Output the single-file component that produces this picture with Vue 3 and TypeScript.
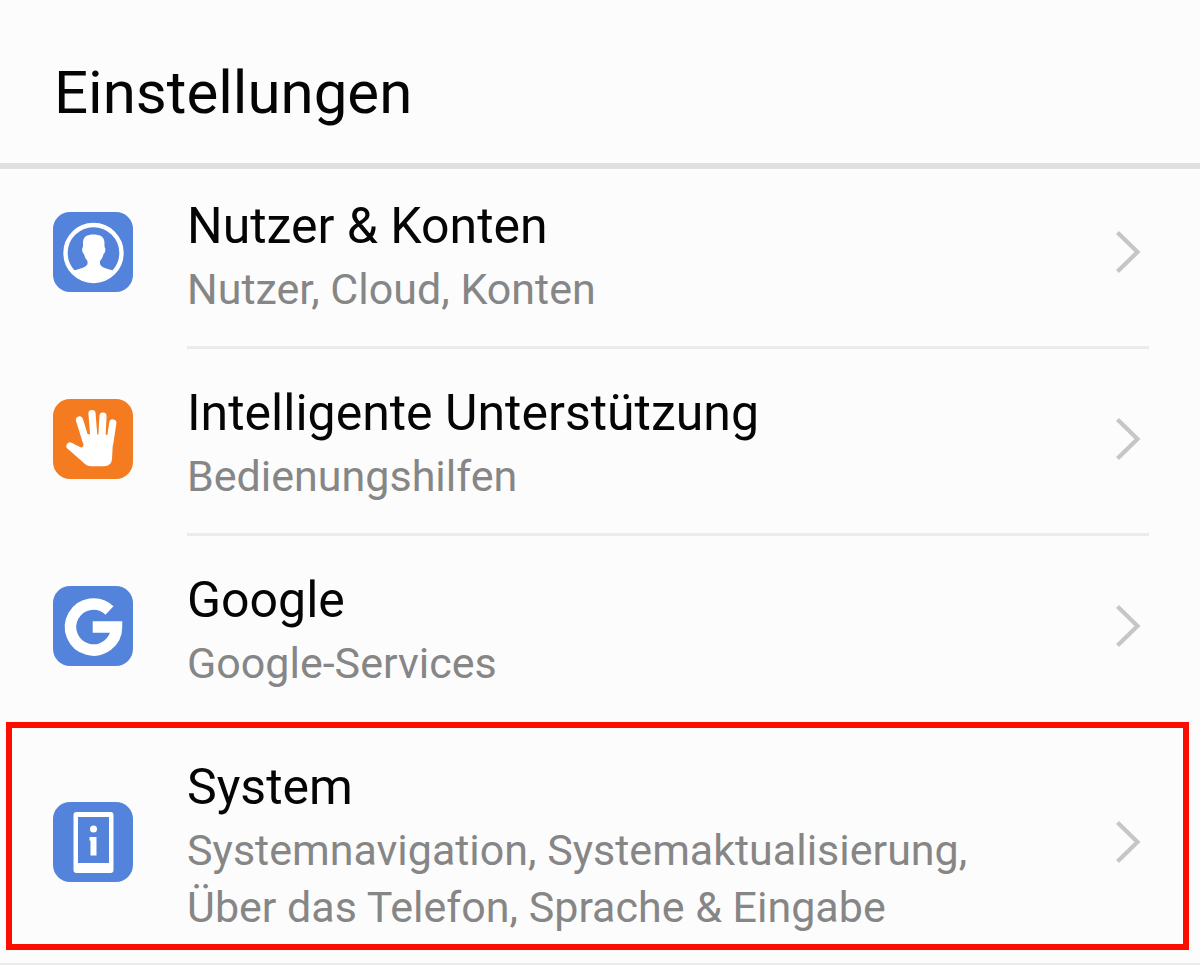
<script setup lang="ts">
type IconName = 'user' | 'hand' | 'google' | 'phone'

interface Entry {
  id: string
  icon: IconName
  title: string
  lines: string[]
  highlighted?: boolean
}

const entries: Entry[] = [
  { id: 'konten', icon: 'user', title: 'Nutzer & Konten', lines: ['Nutzer, Cloud, Konten'] },
  { id: 'unterstuetzung', icon: 'hand', title: 'Intelligente Unterstützung', lines: ['Bedienungshilfen'] },
  { id: 'google', icon: 'google', title: 'Google', lines: ['Google-Services'] },
  {
    id: 'system',
    icon: 'phone',
    title: 'System',
    lines: ['Systemnavigation, Systemaktualisierung,', 'Über das Telefon, Sprache & Eingabe'],
    highlighted: true,
  },
]
</script>

<template>
  <main class="settings">
    <header class="header">
      <h1>Einstellungen</h1>
    </header>
    <ul class="list">
      <li v-for="entry in entries" :key="entry.id" class="item" :class="{ highlighted: entry.highlighted }">
        <a class="row" :href="'#' + entry.id">
          <svg class="icon" :class="entry.icon" viewBox="0 0 80 80" aria-hidden="true">
            <template v-if="entry.icon === 'user'">
              <circle cx="40.5" cy="41" r="28" fill="none" stroke="#fff" stroke-width="4.4" />
              <path
                fill="#fff"
                d="M40.500 22.500C47 22.500 51.500 24.500 51.500 31V35C53 36 52.500 41 50.500 42C50 45 48.500 47 47 49V52C48 56 56 57 62 59C57 66 49 70.500 40.500 70.500C32 70.500 24 66 19 59C25 57 33 56 34.500 52V49C33 47 31.500 45 31 42C29 41 28.500 36 30 35V31C30 24.500 34 22.500 40.500 22.500Z"
              />
            </template>
            <template v-else-if="entry.icon === 'hand'">
              <g fill="none" stroke="#fff" stroke-width="7.2" stroke-linecap="round">
                <path d="M26.500 21L33 42" />
                <path d="M39 14.500L41 40" />
                <path d="M50 17L48.800 40" />
                <path d="M59.800 24L56.800 44" />
                <path d="M17 47L32 57" />
              </g>
              <path
                fill="#fff"
                d="M30 35L60.300 36L59 60Q58.500 67.300 51 67.300H38Q34.500 67.300 32 65L15 50L19 44L28 48.500Q30 48.500 30.500 46Z"
              />
            </template>
            <template v-else-if="entry.icon === 'google'">
              <path fill="none" stroke="#fff" stroke-width="11.5" d="M56.500 24.500A23 23 0 1 0 63.500 41H39.700" />
            </template>
            <template v-else>
              <path
                fill="#fff"
                fill-rule="evenodd"
                d="M23.500 10H57.500Q60.500 10 60.500 13V68Q60.500 71 57.500 71H23.500Q20.500 71 20.500 68V13Q20.500 10 23.500 10ZM25 15V61H56V15Z"
              />
              <circle cx="40.500" cy="27" r="3.500" fill="#fff" />
              <path d="M36.500 35H43.500V53.500H37.500V38.500H36.500Z" fill="#fff" />
            </template>
          </svg>
          <span class="text">
            <span class="title">{{ entry.title }}</span>
            <span class="summary">
              <span v-for="line in entry.lines" :key="line" class="line">{{ line }}</span>
            </span>
          </span>
          <svg class="chevron" viewBox="0 0 26 44" aria-hidden="true">
            <path d="M2.500 2.500L22.500 22L2.500 41.500" fill="none" stroke="#c6c6c6" stroke-width="4.2" />
          </svg>
        </a>
      </li>
    </ul>
  </main>
</template>

<style>
body {
  margin: 0;
  background: #fcfcfc;
}
</style>

<style scoped>
.settings {
  background: #fcfcfc;
  color: #050505;
  font-family: Roboto, "Liberation Sans", sans-serif;
}

.header {
  padding: 58px 54px 35px;
  border-bottom: 6px solid #dfe0df;
}

h1 {
  margin: 0;
  font-size: 60px;
  line-height: 70px;
  font-weight: 400;
}

.list {
  margin: 0;
  padding: 0;
  list-style: none;
}

.item {
  position: relative;
}

.row {
  display: flex;
  align-items: center;
  padding: 24px 59px 28px 53px;
  color: inherit;
  text-decoration: none;
}

.item:first-child .row {
  padding-top: 17px;
}

.item:last-child .row {
  padding-bottom: 27px;
}

.item::after {
  content: "";
  display: block;
  height: 3px;
  margin: 0 51px 0 187px;
  background: #ebebeb;
}

.item:nth-child(3)::after {
  background: transparent;
}

.item:last-child::after {
  height: 2px;
  margin: 0;
}

.icon {
  flex: none;
  width: 80px;
  height: 80px;
  border-radius: 17px;
  background: #5383da;
}

.icon.hand {
  background: #f47b20;
}

.text {
  flex: 1;
  min-width: 0;
  margin-left: 54px;
  padding-top: 9px;
}

.title {
  display: block;
  margin-bottom: 4px;
  font-size: 50px;
  line-height: 62px;
}

.summary {
  display: block;
  color: #868686;
  font-size: 43px;
  line-height: 57px;
}

.line {
  display: block;
}

.chevron {
  flex: none;
  width: 26px;
  height: 44px;
}

.highlighted::before {
  content: "";
  position: absolute;
  inset: -1px 11px 15px 6px;
  border: 6px solid #fb0d00;
  pointer-events: none;
}
</style>
